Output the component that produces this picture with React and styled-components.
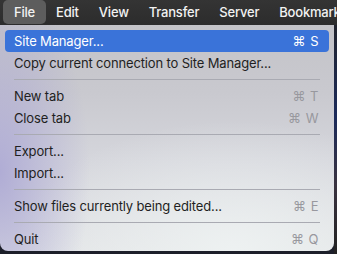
import React from "react";
import styled, { createGlobalStyle } from "styled-components";

const Global = createGlobalStyle`
  html, body { margin: 0; padding: 0; background: #1e1e22; }
  body { width: 337px; height: 254px; overflow: hidden; font-family: Inter, "Liberation Sans", sans-serif; }
`;

const Screen = styled.div`
  width: 337px;
  height: 254px;
  display: flex;
  flex-direction: column;
  background: #1d1f2a;
  overflow: hidden;
`;

const MenuBar = styled.div`
  height: 25px;
  display: flex;
  align-items: center;
  padding-left: 3px;
  background: linear-gradient(180deg, #343434 0%, #2c2c2c 100%);
  flex-shrink: 0;
  overflow: hidden;
`;

const BarItem = styled.div`
  height: 24px;
  display: flex;
  align-items: center;
  padding: 0 10px;
  margin-top: -1px;
  border-radius: 5px;
  color: #f2f2f2;
  font-size: 13px;
  font-weight: 500;
  letter-spacing: -0.2px;
  background: ${(p) => (p.$active ? "#5d5d5d" : "transparent")};
  white-space: nowrap;
  flex-shrink: 0;
  &:first-child {
    padding-left: 11px;
    padding-right: 11px;
  }
`;

const Below = styled.div`
  flex: 1;
  display: flex;
`;

const Panel = styled.div`
  width: 334px;
  height: 226px;
  box-sizing: border-box;
  padding: 5px 5px 0 5px;
  border-radius: 0 0 8px 8px;
  background:
    radial-gradient(ellipse 90px 190px at 0% 65%, rgba(172, 168, 212, 0.9), rgba(172, 168, 212, 0) 100%),
    radial-gradient(ellipse 220px 130px at 70% 100%, rgba(238, 242, 242, 0.95), rgba(238, 242, 242, 0) 100%),
    linear-gradient(180deg, #c3c3c8 0%, #c9c9cf 30%, #d5d6dc 60%, #e2e4e6 100%);
  display: flex;
  flex-direction: column;
`;

const Item = styled.div`
  height: 22px;
  display: flex;
  align-items: center;
  justify-content: space-between;
  padding: 0 10px 0 9px;
  border-radius: 4px;
  font-size: 13px;
  letter-spacing: -0.15px;
  color: ${(p) => (p.$selected ? "#ffffff" : "#1f1f22")};
  background: ${(p) => (p.$selected ? "#3a73d9" : "transparent")};
  white-space: nowrap;
`;

const Shortcut = styled.span`
  color: ${(p) => (p.$selected ? "#ffffff" : "#98989e")};
  font-size: 13px;
  letter-spacing: 0.5px;
`;

const Separator = styled.div`
  height: 11px;
  display: flex;
  align-items: center;
  padding: 0 9px;
  &::after {
    content: "";
    flex: 1;
    height: 1px;
    background: #a9aab2;
  }
`;

const Edge = styled.div`
  flex: 1;
  background: linear-gradient(180deg, #22242e 0%, #1b2a5a 40%, #3a3340 70%, #222 100%);
`;

const items = [
  { label: "Site Manager...", key: "⌘ S", selected: true },
  { label: "Copy current connection to Site Manager..." },
  "sep",
  { label: "New tab", key: "⌘ T" },
  { label: "Close tab", key: "⌘ W" },
  "sep",
  { label: "Export..." },
  { label: "Import..." },
  "sep",
  { label: "Show files currently being edited...", key: "⌘ E" },
  "sep",
  { label: "Quit", key: "⌘ Q" },
];

export default function App() {
  return (
    <>
      <Global />
      <Screen>
        <MenuBar>
          {["File", "Edit", "View", "Transfer", "Server", "Bookmarks"].map((m, i) => (
            <BarItem key={m} $active={i === 0}>{m}</BarItem>
          ))}
        </MenuBar>
        <Below>
          <Panel>
            {items.map((it, i) =>
              it === "sep" ? (
                <Separator key={i} />
              ) : (
                <Item key={i} $selected={it.selected}>
                  <span>{it.label}</span>
                  {it.key && <Shortcut $selected={it.selected}>{it.key}</Shortcut>}
                </Item>
              )
            )}
          </Panel>
          <Edge />
        </Below>
      </Screen>
    </>
  );
}
